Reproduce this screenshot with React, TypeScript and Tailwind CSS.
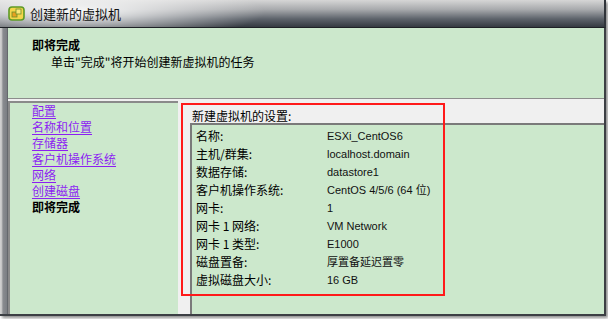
import React from 'react';

const navItems = ['配置', '名称和位置', '存储器', '客户机操作系统', '网络', '创建磁盘'];

const settings: [string, string][] = [
    ['名称:', 'ESXi_CentOS6'],
    ['主机/群集:', 'localhost.domain'],
    ['数据存储:', 'datastore1'],
    ['客户机操作系统:', 'CentOS 4/5/6 (64 位)'],
    ['网卡:', '1'],
    ['网卡 1 网络:', 'VM Network'],
    ['网卡 1 类型:', 'E1000'],
    ['磁盘置备:', '厚置备延迟置零'],
    ['虚拟磁盘大小:', '16 GB'],
];

function VmIcon() {
    return (
        <svg width="17" height="15" viewBox="0 0 17 15">
            <rect x="1" y="1" width="15" height="13" rx="3" fill="#f5d54a" stroke="#5d9a26" strokeWidth="1.6" />
            <rect x="4" y="6" width="5" height="5" fill="#e8a020" stroke="#6b8f2a" strokeWidth="0.8" />
            <rect x="8" y="3" width="5" height="5" fill="#fbe77a" stroke="#6b8f2a" strokeWidth="0.8" />
        </svg>
    );
}

export default function App() {
    return (
        <div className="relative w-[608px] h-[319px] bg-white overflow-hidden font-['Noto_Sans_CJK_SC',sans-serif] text-[12px] text-black">
            <div className="flex flex-col w-[606px] h-[316px] shadow-[2px_2px_3px_rgba(0,0,0,0.45)] border-b-2 border-[#3c3f44]">
                {/* title bar */}
                <div className="flex items-center h-[28px] shrink-0 pl-[8px] gap-[5px] border-b border-[#1e2126] border-r-2 border-r-[#30343a] bg-[radial-gradient(ellipse_190px_30px_at_75px_12px,rgba(255,255,255,0.95),rgba(255,255,255,0)),linear-gradient(to_bottom,#d6d6d6_0%,#a8aaad_35%,#5d636b_70%,#353a41_100%)]">
                    <VmIcon />
                    <span className="text-[13px] leading-[14px] text-[#111]">创建新的虚拟机</span>
                </div>

                <div className="flex flex-1 min-h-0">
                    {/* left frame */}
                    <div className="w-[8px] shrink-0 bg-[linear-gradient(to_right,#d4d4d4_0%,#c0c0c0_25%,#8a8c90_35%,#7c7f84_85%,#55585c_100%)]" />

                    <div className="flex flex-col flex-1 min-w-0 border-r-2 border-[#3c3f44]">
                        {/* header */}
                        <div className="h-[71px] shrink-0 bg-[#cce8cc] border-b border-[#8c8c8c] pt-[9px]">
                            <div className="pl-[24px] font-bold leading-[16px]">即将完成</div>
                            <div className="pl-[43px] leading-[16px] mt-[1px]">单击"完成"将开始创建新虚拟机的任务</div>
                        </div>

                        {/* main */}
                        <div className="flex flex-1 min-h-0 bg-[#f0f0f0]">
                            <div className="w-[170px] shrink-0 mt-[2px] bg-[#cce8cc] border-t-2 border-l-2 border-[#8a8a8a] pl-[22px] pt-0">
                                {navItems.map((item) => (
                                    <div key={item} className="leading-[16px]">
                                        <span className="text-[#8c1ef2] underline underline-offset-[2px]">{item}</span>
                                    </div>
                                ))}
                                <div className="leading-[16px] font-bold">即将完成</div>
                            </div>

                            <div className="flex flex-col flex-1 min-w-0 pl-[12px]">
                                <div className="h-[24px] shrink-0 pl-[2px] pt-[10px] leading-[14px]">新建虚拟机的设置:</div>
                                <div className="flex-1 bg-[#cce8cc] border-t-2 border-l-2 border-[#7a7a7a] pt-[2px] pl-[4px]">
                                    {settings.map(([label, value]) => (
                                        <div key={label} className="flex h-[18px] items-center">
                                            <span className="w-[131px] shrink-0">{label}</span>
                                            <span className="font-['Liberation_Sans','Noto_Sans_CJK_SC',sans-serif] text-[11px] text-[#111]">
                                                {value}
                                            </span>
                                        </div>
                                    ))}
                                </div>
                            </div>
                        </div>
                    </div>
                </div>
            </div>

            {/* red annotation box */}
            <div className="absolute left-[181px] top-[103px] w-[264px] h-[193px] border-2 border-[#ff1a1a] pointer-events-none" />
        </div>
    );
}
